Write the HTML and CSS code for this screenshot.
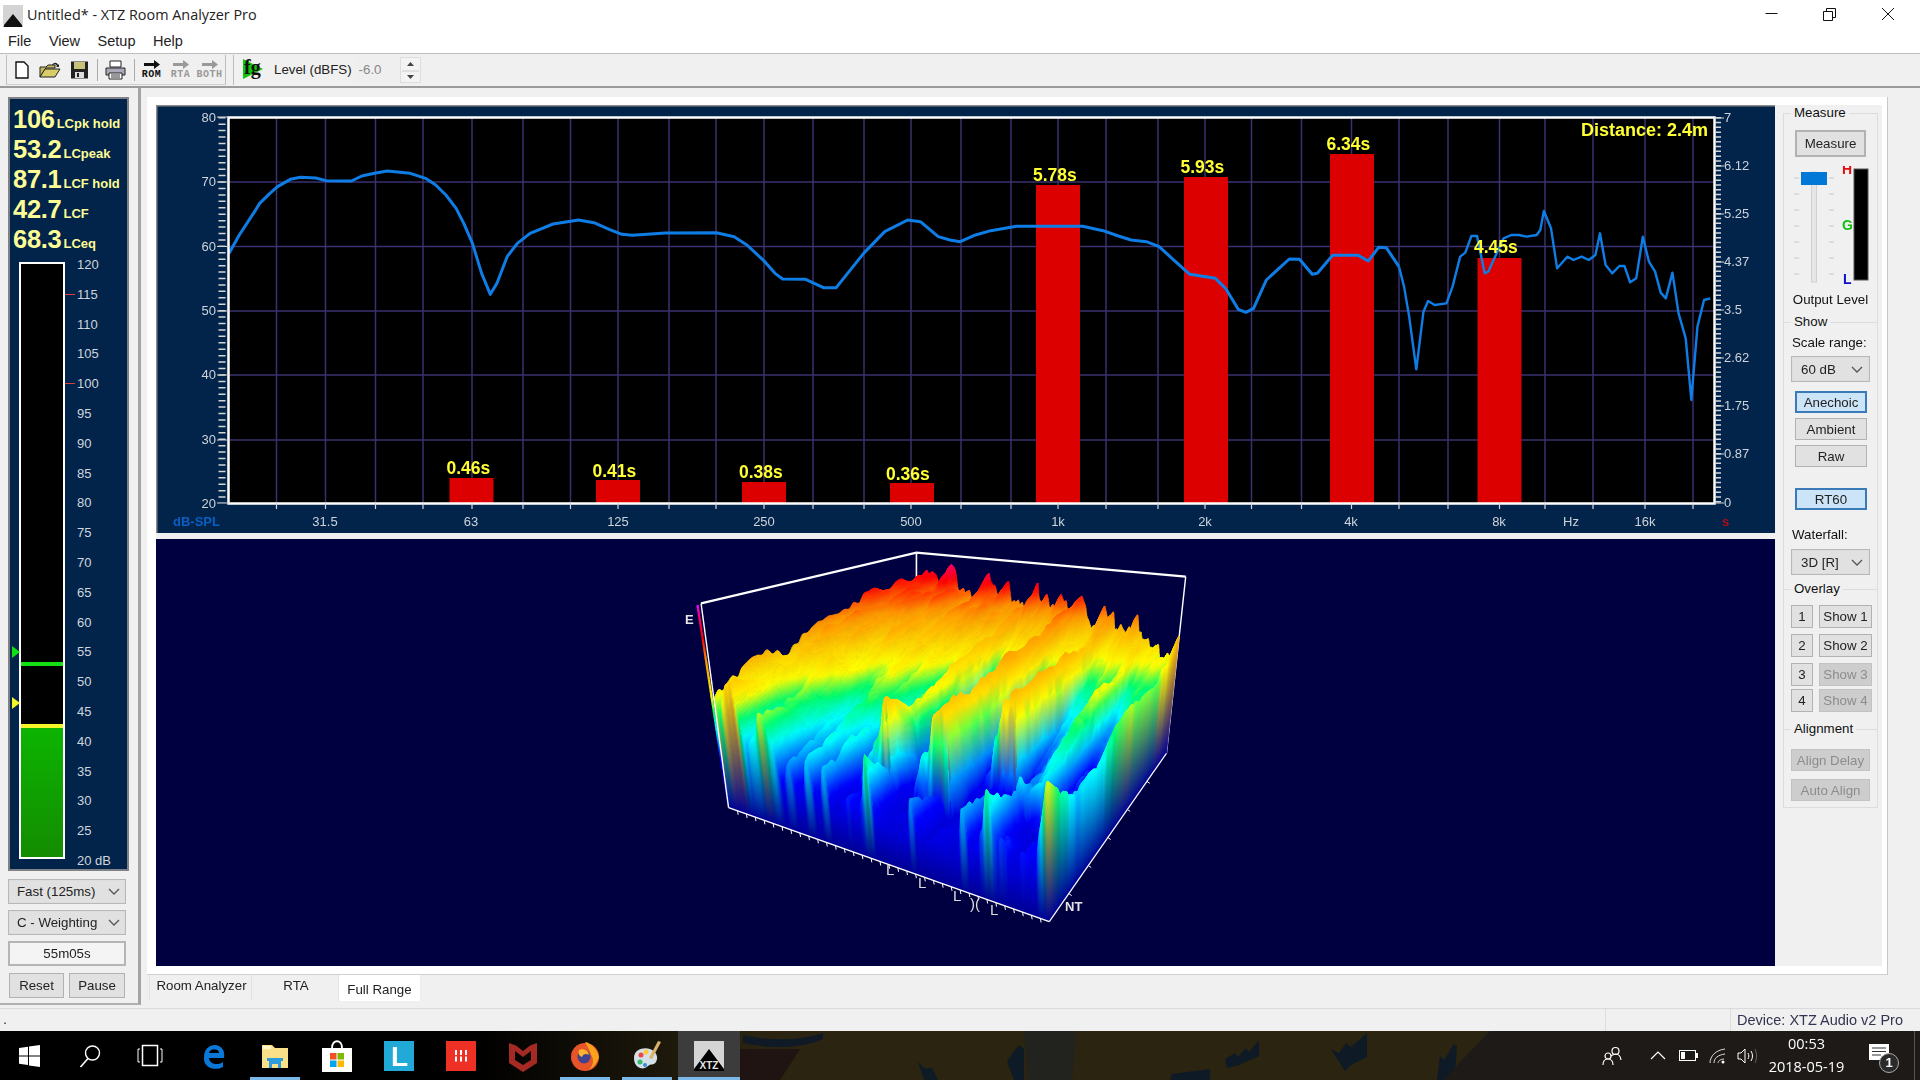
FILE: index.html
```html
<!DOCTYPE html>
<html lang="en">
<head>
<meta charset="utf-8">
<title>Untitled* - XTZ Room Analyzer Pro</title>
<link rel="stylesheet" href="styles.css">
</head>
<body>
<header class="titlebar">
  <svg class="app-icon" width="22" height="22" viewBox="0 0 22 22"><rect width="20" height="20" x="1" y="0" fill="#d4d4d4"/><path d="M11 9 L20 20 L21 24 H1 L2 20 Z" fill="#111"/></svg>
  <span class="title-text">Untitled* - XTZ Room Analyzer Pro</span>
  <div class="win-controls">
    <svg width="58" height="28" viewBox="0 0 58 28"><path d="M22.500 13.500H34.500" stroke="#111" fill="none"/></svg>
    <svg width="58" height="28" viewBox="0 0 58 28"><path d="M22.500 11.500h9v9h-9zM25.500 11V8.500h9v9H32" stroke="#111" fill="none"/></svg>
    <svg width="58" height="28" viewBox="0 0 58 28"><path d="M23 8L35 20M35 8L23 20" stroke="#111" fill="none"/></svg>
  </div>
</header>
<nav class="menubar"><span>File</span><span>View</span><span>Setup</span><span>Help</span></nav>
<div class="toolbar">
  <div class="tool-group tg-first">
    <svg class="tool" width="16" height="18" viewBox="0 0 16 18"><path d="M2 1h8l4 4v12H2z" fill="#fff" stroke="#111" stroke-width="1.400"/></svg>
    <svg class="tool" width="22" height="18" viewBox="0 0 22 18"><path d="M1 6h6l2-2h7v3H7L1 16z" fill="#c9b95a" stroke="#222"/><path d="M1 16L6 8h15l-5 8z" fill="#d8cc6a" stroke="#222"/><path d="M13 4c2-3 5-3 6 0l1-1v3h-3l1-1c-1-2-3-2-4-1" fill="#222"/></svg>
    <svg class="tool" width="19" height="18" viewBox="0 0 19 18"><rect x="1" y="0.500" width="17" height="17" fill="#222"/><rect x="4" y="1" width="11" height="7" fill="#c9c07a"/><rect x="5" y="11" width="9" height="6" fill="#ddd"/><rect x="7" y="12" width="2" height="4" fill="#222"/></svg>
    <i class="tool-sep"></i>
    <svg class="tool" width="21" height="20" viewBox="0 0 21 20"><path d="M5 1h11v6H5z" fill="#fff" stroke="#222"/><path d="M1 8h19v7H1z" fill="#aab" stroke="#222"/><path d="M4 13h13v6H4z" fill="#fff" stroke="#222"/><path d="M6 15h9M6 17h9" stroke="#333"/></svg>
    <i class="tool-sep s2"></i>
    <div class="tool-mode"><svg width="16" height="9" viewBox="0 0 16 9"><path d="M0 3h10V0l6 4.500-6 4.500V6H0z" fill="#111"/></svg><b>ROM</b></div>
    <div class="tool-mode off"><svg width="16" height="9" viewBox="0 0 16 9"><path d="M0 3h10V0l6 4.500-6 4.500V6H0z" fill="#999"/></svg><b>RTA</b></div>
    <div class="tool-mode off"><svg width="16" height="9" viewBox="0 0 16 9"><path d="M0 3h10V0l6 4.500-6 4.500V6H0z" fill="#999"/></svg><b>BOTH</b></div>
  </div>
  <div class="tool-group tg-level">
    <svg class="fg-icon" width="22" height="22" viewBox="0 0 22 22"><path d="M1 0L21 10L1 20z" fill="#12c40c"/><text x="2" y="15" class="fg-text">fg</text></svg>
    <span class="level-label">Level (dBFS)</span>
    <span class="level-input">-6.0</span>
    <div class="spin">
      <svg width="19" height="26" viewBox="0 0 19 26"><path d="M6 8l3.500-4 3.500 4zM6 17l3.500 4 3.500-4z" fill="#444"/><path d="M1 13h17" stroke="#ccc"/></svg>
    </div>
  </div>
</div>

<div class="workspace">
  <aside class="side">
    <section class="meter">
      <div class="readouts">
        <div class="readout"><b>106</b><small>LCpk hold</small></div>
        <div class="readout"><b>53.2</b><small>LCpeak</small></div>
        <div class="readout"><b>87.1</b><small>LCF hold</small></div>
        <div class="readout"><b>42.7</b><small>LCF</small></div>
        <div class="readout"><b>68.3</b><small>LCeq</small></div>
      </div>
      <div class="gauge">
        <i class="mark mark-g"></i><i class="mark mark-y"></i>
        <div class="bar">
          <div class="bar-space"></div>
          <div class="peak-g"></div>
          <div class="bar-gap"></div>
          <div class="peak-y"></div>
          <div class="bar-fill"></div>
        </div>
        <div class="scale">
          <span>120</span><span class="redtick">115</span><span>110</span><span>105</span><span class="redtick">100</span><span>95</span><span>90</span><span>85</span><span>80</span><span>75</span><span>70</span><span>65</span><span>60</span><span>55</span><span>50</span><span>45</span><span>40</span><span>35</span><span>30</span><span>25</span><span>20 dB</span>
        </div>
      </div>
    </section>
    <div class="select s-side"><span>Fast (125ms)</span><svg width="12" height="7" viewBox="0 0 12 7"><path d="M1 1l5 5 5-5" fill="none" stroke="#555" stroke-width="1.300"/></svg></div>
    <div class="select s-side s-tight"><span>C - Weighting</span><svg width="12" height="7" viewBox="0 0 12 7"><path d="M1 1l5 5 5-5" fill="none" stroke="#555" stroke-width="1.300"/></svg></div>
    <div class="timer">55m05s</div>
    <div class="side-buttons"><button class="btn b-reset">Reset</button><button class="btn b-pause">Pause</button></div>
  </aside>

  <main class="main">
    <div class="sheet">
      <div class="sheet-inner">
        <div class="charts">
          <svg class="chart" width="1619" height="428" viewBox="156 105 1619 428">
            <rect x="156" y="105" width="1619" height="428" fill="#02234a"/>
            <path d="M156 105.500H1775M156.500 105V533" stroke="#8a8a8a" stroke-width="2" fill="none"/>
            <rect x="229" y="117" width="1485" height="386" fill="#000"/>
            <g class="grid">
              <path d="M229 182H1714M229 246.500H1714M229 311H1714M229 375H1714M229 440H1714"/>
              <path d="M276.500 117V503M325.500 117V503M375.500 117V503M423 117V503M472 117V503M523 117V503M570.500 117V503M618 117V503M669 117V503M716 117V503M764 117V503M813 117V503M864 117V503M911 117V503M961 117V503M1011 117V503M1058 117V503M1106 117V503M1158 117V503M1205 117V503M1251.500 117V503M1301.500 117V503M1351.500 117V503M1399 117V503M1448 117V503M1499.500 117V503M1545 117V503M1593 117V503M1645 117V503M1693 117V503"/>
            </g>
            <g fill="#dd0000">
              <rect x="449.500" y="478" width="44" height="25"/><rect x="596" y="480" width="44" height="23"/><rect x="742" y="482" width="44" height="21"/><rect x="890" y="483" width="44" height="20"/>
              <rect x="1036" y="185" width="44" height="318"/><rect x="1184" y="177" width="44" height="326"/><rect x="1330" y="154" width="44" height="349"/><rect x="1477.500" y="258" width="44" height="245"/>
            </g>
            <g transform="translate(150,100) scale(0.5102,0.33333)" fill="none" stroke="#0f7de6">
              <polyline class="curve c-thick" points="155,460 175,405 205,335 215,310 235,280 250,260 275,238 295,232 325,234 345,242 395,243 415,228 440,220 465,213 510,220 540,235 560,255 580,285 600,325 615,370 632,430 650,520 667,583 680,550 700,470 720,430 745,400 790,372 840,360 870,368 900,388 925,403 945,406 975,403 1010,399 1110,398 1145,410 1170,435 1205,485 1225,520 1240,537 1285,538 1320,563 1345,563 1370,515 1400,458 1440,395 1485,360 1510,365 1545,410 1568,420 1588,425 1618,405 1648,392 1698,379 1828,379 1868,392 1898,408 1923,420 1953,425 1978,440 2003,475 2038,523 2088,535 2108,565 2133,628 2148,637 2163,625 2188,540 2233,477 2253,478 2278,523 2288,520 2318,466 2368,466 2388,483 2408,442 2423,443 2448,500"/>
              <polyline class="curve c-thin" points="2448,500 2458,560 2468,650 2482,808 2496,635 2505,603 2518,615 2541,610 2553,560 2568,470 2578,458 2590,408 2601,408 2616,520 2623,515 2653,415 2668,405 2683,405 2698,410 2718,405 2725,390 2732,333 2746,385 2758,505 2778,470 2790,480 2806,470 2820,480 2833,465 2842,400 2853,495 2866,520 2880,498 2890,498 2901,547 2913,535 2926,410 2938,485 2950,515 2961,578 2971,595 2984,518 2996,640 3010,715 3021,900 3033,680 3046,600 3058,595"/>
            </g>
            <rect x="228.500" y="117.500" width="1486" height="386" fill="none" stroke="#fff" stroke-width="2.500"/>
            <g class="ticks">
              <path class="minor-l" d="M222 117V503"/>
              <path class="minor-r" d="M1718 117V503"/>
              <path d="M217 117H229M217 182H229M217 246.500H229M217 311H229M217 375H229M217 440H229M217 503H229"/>
              <path d="M1714 118H1724M1714 166H1724M1714 214H1724M1714 262H1724M1714 310H1724M1714 358H1724M1714 406H1724M1714 454H1724M1714 503H1724"/>
              <path d="M276.500 503V509M325.500 503V509M375.500 503V509M423 503V509M472 503V509M523 503V509M570.500 503V509M618 503V509M669 503V509M716 503V509M764 503V509M813 503V509M864 503V509M911 503V509M961 503V509M1011 503V509M1058 503V509M1106 503V509M1158 503V509M1205 503V509M1251.500 503V509M1301.500 503V509M1351.500 503V509M1399 503V509M1448 503V509M1499.500 503V509M1545 503V509M1593 503V509M1645 503V509M1693 503V509"/>
            </g>
            <g class="axis-l">
              <text x="216" y="122">80</text><text x="216" y="186">70</text><text x="216" y="250.500">60</text><text x="216" y="315">50</text><text x="216" y="379">40</text><text x="216" y="444">30</text><text x="216" y="507.500">20</text>
            </g>
            <g class="axis-r">
              <text x="1724" y="122">7</text><text x="1724" y="170">6.12</text><text x="1724" y="218">5.25</text><text x="1724" y="266">4.37</text><text x="1724" y="314">3.5</text><text x="1724" y="362">2.62</text><text x="1724" y="410">1.75</text><text x="1724" y="458">0.87</text><text x="1724" y="507">0</text>
            </g>
            <g class="axis-x">
              <text x="325" y="526">31.5</text><text x="471" y="526">63</text><text x="618" y="526">125</text><text x="764" y="526">250</text><text x="911" y="526">500</text><text x="1058" y="526">1k</text><text x="1205" y="526">2k</text><text x="1351" y="526">4k</text><text x="1499" y="526">8k</text><text x="1571" y="526">Hz</text><text x="1645" y="526">16k</text>
            </g>
            <text class="unit-db" x="173" y="526">dB-SPL</text>
            <text class="unit-s" x="1722" y="526">s</text>
            <g class="bar-labels">
              <text x="446.500" y="474">0.46s</text><text x="592.500" y="476.500">0.41s</text><text x="739" y="478">0.38s</text><text x="886" y="479.500">0.36s</text>
              <text x="1033" y="181">5.78s</text><text x="1180.500" y="172.500">5.93s</text><text x="1326.500" y="150">6.34s</text><text x="1474" y="253">4.45s</text>
            </g>
            <text class="distance" x="1708" y="136">Distance: 2.4m</text>
          </svg>
          <div class="waterfall">
            <canvas id="wf" width="1619" height="427"></canvas>
            <svg class="wf-labels" width="1619" height="427" viewBox="156 539 1619 427">
              <text class="wf-b" x="685" y="624">E</text>
              <text class="wf-b" x="1065" y="911">NT</text>
              <text class="wf-l" x="886" y="875">L</text><text class="wf-l" x="918" y="888">L</text><text class="wf-l" x="953" y="901">L</text><text class="wf-l" x="970" y="909">)(</text><text class="wf-l" x="990" y="915">L</text>
            </svg>
          </div>
        </div>

        <div class="controls">
          <div class="group g-measure">
            <span class="legend">Measure</span>
            <button class="btn b-measure">Measure</button>
            <svg class="output-svg" width="78" height="122" viewBox="0 0 78 122">
              <rect x="19.500" y="6" width="5" height="110" fill="#e6e6e6" stroke="#d0d0d0"/>
              <path class="otick" d="M2 12h5M37 12h5M2 28h5M37 28h5M2 44h5M37 44h5M2 60h5M37 60h5M2 76h5M37 76h5M2 92h5M37 92h5M2 108h5M37 108h5"/>
              <rect x="9" y="6" width="26" height="13" fill="#0078d7"/>
              <rect x="62" y="3" width="14" height="111" fill="#000" stroke="#555"/>
              <text class="led led-h" x="50" y="8">H</text>
              <text class="led led-g" x="50" y="64">G</text>
              <text class="led led-l" x="51" y="118">L</text>
            </svg>
            <div class="out-label">Output Level</div>
          </div>
          <div class="group g-show">
            <span class="legend">Show</span>
            <div class="ctl-label">Scale range:</div>
            <div class="select s-ctl"><span>60 dB</span><svg width="12" height="7" viewBox="0 0 12 7"><path d="M1 1l5 5 5-5" fill="none" stroke="#555" stroke-width="1.300"/></svg></div>
            <button class="btn b-wide sel b-a1">Anechoic</button>
            <button class="btn b-wide b-a2">Ambient</button>
            <button class="btn b-wide b-a2">Raw</button>
            <button class="btn b-wide sel b-rt">RT60</button>
            <div class="ctl-label l-water">Waterfall:</div>
            <div class="select s-ctl s-water"><span>3D [R]</span><svg width="12" height="7" viewBox="0 0 12 7"><path d="M1 1l5 5 5-5" fill="none" stroke="#555" stroke-width="1.300"/></svg></div>
          </div>
          <div class="group g-overlay">
            <span class="legend">Overlay</span>
            <div class="ov-row r1"><button class="btn b-num">1</button><button class="btn b-show">Show 1</button></div>
            <div class="ov-row r2"><button class="btn b-num">2</button><button class="btn b-show">Show 2</button></div>
            <div class="ov-row r3"><button class="btn b-num">3</button><button class="btn b-show dis">Show 3</button></div>
            <div class="ov-row r4"><button class="btn b-num">4</button><button class="btn b-show dis">Show 4</button></div>
          </div>
          <div class="group g-align">
            <span class="legend">Alignment</span>
            <button class="btn b-al dis b-al1">Align Delay</button>
            <button class="btn b-al dis b-al2">Auto Align</button>
          </div>
        </div>
      </div>
    </div>
    <div class="tabs">
      <span class="tab t-room">Room Analyzer</span>
      <span class="tab t-rta">RTA</span>
      <span class="tab t-full">Full Range</span>
    </div>
  </main>
</div>

<footer class="statusbar"><span class="st-left">.</span><span class="st-mid"></span><span class="st-dev">Device: XTZ Audio v2 Pro</span></footer>

<div class="taskbar">
  <svg class="wallpaper" width="1180" height="49" viewBox="0 0 1180 49">
    <path d="M0 18H60L40 49H0z" fill="#1f1412"/>
    <path d="M3 4C30 10 60 10 83 2V8C60 18 30 18 3 12z" fill="#0f1a26"/>
    <path d="M284 0h52l-4 49h-44z" fill="#22231f"/>
    <path d="M485 28l10-6 3 4 8-9 3 4 10-12v16l-20 9-12 3z" fill="#0e1a26"/>
    <path d="M591 18l8 4 7-10 5 4 16-14v24l-16 8-6 6-8-12z" fill="#0e1a26"/>
    <path d="M697 49l3-24 4 4 10-16 3 2-2 26-8 8z" fill="#0e1a26"/>
    <path d="M430 49l2-6 38-5v11z" fill="#0e1a26"/>
    <path d="M178 31l6 6 8 0 6 12h-14z" fill="#0e1a26"/>
    <path d="M267 30l12-16 5 4v31h-10z" fill="#0e1a26"/>
    <path d="M750 0H1180V49H703z" fill="#1d1a17"/>
  </svg>
  <div class="tb-cell c-sys"><svg width="22" height="22" viewBox="0 0 22 22"><path d="M0 3l9-1.300V10.500H0zM10 1.500L21 0V10.500H10zM0 11.500h9V20L0 18.800zM10 11.500h11V22L10 20.400z" fill="#fff"/></svg></div>
  <div class="tb-cell c-sys"><svg width="22" height="24" viewBox="0 0 22 24"><circle cx="13.500" cy="9" r="7" fill="none" stroke="#fff" stroke-width="1.400"/><path d="M9 14.500L1.500 23" stroke="#fff" stroke-width="1.600"/></svg></div>
  <div class="tb-cell c-sys"><svg width="26" height="24" viewBox="0 0 26 24"><rect x="5.500" y="1.500" width="15" height="20" fill="none" stroke="#fff" stroke-width="1.500"/><path d="M3 5H1v13h2M23 5h2v13h-2" fill="none" stroke="#fff"/></svg></div>
  <div class="tb-cell c-edge"><svg width="26" height="28" viewBox="0 0 26 28"><path d="M4 15C4 5 13 1 19 4c4 2 6 6 5 12H9c0 6 9 8 14 4v5c-7 4-20 2-19-10z M9 11h10c0-5-9-5-10 0z" fill="#0a78d7" fill-rule="evenodd"/></svg></div>
  <div class="tb-cell open"><svg width="28" height="26" viewBox="0 0 28 26"><path d="M1 2h10l3 3h13v20H1z" fill="#fbe08a"/><rect x="2" y="3" width="8" height="3" fill="#fff7d0"/><path d="M8 17h12v8h-3v-4h-6v4H8z" fill="#2e9bdc"/><rect x="6" y="15" width="16" height="3" fill="#2e9bdc"/></svg></div>
  <div class="tb-cell"><svg width="30" height="32" viewBox="0 0 30 32"><path d="M10 8c0-9 10-9 10 0" fill="none" stroke="#fff" stroke-width="1.800"/><rect y="8" width="30" height="24" fill="#fff"/><rect x="8" y="13" width="6.500" height="6.500" fill="#f25022"/><rect x="15.500" y="13" width="6.500" height="6.500" fill="#7fba00"/><rect x="8" y="20.500" width="6.500" height="6.500" fill="#00a4ef"/><rect x="15.500" y="20.500" width="6.500" height="6.500" fill="#ffb900"/></svg></div>
  <div class="tb-cell"><svg width="30" height="30" viewBox="0 0 30 30"><rect width="30" height="30" fill="#21aad8"/><text class="tile-l" x="7" y="25">L</text></svg></div>
  <div class="tb-cell"><svg width="30" height="30" viewBox="0 0 30 30"><rect width="30" height="30" fill="#ee3124"/><path d="M10 9v13M15 9v13M20 9v13" stroke="#fff" stroke-width="2" stroke-dasharray="5 1.500"/></svg></div>
  <div class="tb-cell"><svg width="28" height="32" viewBox="0 0 28 32"><path d="M0 3l7 2.500L14 11l7-5.500L28 3v20l-14 9L0 23zM6 11v9l8 5 8-5v-9l-8 6z" fill="#a52a24" fill-rule="evenodd"/></svg></div>
  <div class="tb-cell open"><svg width="30" height="32" viewBox="0 0 30 32"><ellipse cx="15" cy="17" rx="14" ry="14" fill="#e8542a"/><path d="M15 2c6 1 12 7 14 15-2 6-6 11-10 13 5-5 5-11 2-15-1-5-4-9-6-13z" fill="#f9a31d"/><circle cx="14" cy="17" r="6.500" fill="#43428f"/><path d="M9 10c4-2 9 0 10 5-3-2-6-1-7 2-3-1-4-4-3-7z" fill="#ffb62e"/></svg></div>
  <div class="tb-cell open"><svg width="30" height="32" viewBox="0 0 30 32"><path d="M2 18C2 9 12 7 18 9c6 2 9 8 6 13-3 4-5 1-8 4-3 3-7 3-10 1-3-2-4-5-4-9z" fill="#d5dfe8"/><circle cx="9" cy="15" r="2.500" fill="#e44"/><circle cx="14" cy="12" r="2.500" fill="#fc3"/><circle cx="8" cy="22" r="2.500" fill="#3b6"/><circle cx="13" cy="25" r="2" fill="#38d"/><path d="M26 1l3 1-9 17-3-1z" fill="#d9b36a"/></svg></div>
  <div class="tb-cell active"><svg width="30" height="30" viewBox="0 0 30 30"><rect width="30" height="30" fill="#d4d4d4"/><path d="M15 8L30 28V30H0V28z" fill="#000"/><text class="tile-xtz" x="15" y="28">XTZ</text></svg></div>
  <div class="tray">
    <svg width="20" height="20" viewBox="0 0 20 20" class="t-person"><circle cx="13.500" cy="5" r="3.500" fill="none" stroke="#fff" stroke-width="1.200"/><circle cx="6" cy="10" r="3" fill="none" stroke="#fff" stroke-width="1.200"/><path d="M1 19c0-4 2-6 5-6s5 2 5 6M9 10c2-1 3-2 4.500-2 3 0 5 2 5.500 6" fill="none" stroke="#fff" stroke-width="1.200"/></svg>
    <svg width="16" height="9" viewBox="0 0 16 9" class="t-chev"><path d="M1 8l7-7 7 7" fill="none" stroke="#fff" stroke-width="1.200"/></svg>
    <svg width="19" height="11" viewBox="0 0 19 11" class="t-batt"><rect x="0.500" y="0.500" width="16" height="10" fill="none" stroke="#fff"/><rect x="2" y="2" width="4" height="7" fill="#fff"/><rect x="17" y="3" width="2" height="5" fill="#fff"/></svg>
    <svg width="17" height="16" viewBox="0 0 17 16" class="t-wifi"><path d="M1 15C1 8 7 2 16 1M5 15c0-5 4-8 11-9M9 15c0-2 3-4 6-4" fill="none" stroke="#ddd"/><circle cx="14" cy="14" r="1.500" fill="#fff"/></svg>
    <svg width="20" height="16" viewBox="0 0 20 16" class="t-vol"><path d="M1 5h3l4-4v14l-4-4H1z" fill="none" stroke="#fff"/><path d="M11 5c1 2 1 4 0 6M14 3c2 3 2 7 0 10" fill="none" stroke="#fff"/><path d="M18 1c2 4 2 10 0 14" fill="none" stroke="#666"/></svg>
    <div class="clock"><span>00:53</span><span>2018-05-19</span></div>
    <div class="notif"><svg width="20" height="17" viewBox="0 0 20 17"><path d="M0 0h20v16H0z" fill="#fff"/><path d="M3 4h14M3 7.500h14M3 11h9" stroke="#333"/></svg><span class="badge">1</span></div>
    <i class="show-desktop"></i>
  </div>
</div>
<script src="waterfall.js"></script>
</body>
</html>
```
FILE: styles.css
```css
* { box-sizing: border-box; }
html, body { margin: 0; padding: 0; }
body {
  width: 1920px; height: 1080px; overflow: hidden;
  display: flex; flex-direction: column;
  background: #f0f0f0; color: #111;
  font-family: "Liberation Sans", Arial, sans-serif; font-size: 13.300px;
  filter: blur(0.35px);
}
button { font: inherit; color: inherit; padding: 0; }

.titlebar { height: 30px; flex: none; display: flex; align-items: center; background: #fff; padding-left: 2px; position: relative; }
.app-icon { flex: none; margin-top: 2px; }
.title-text { margin-left: 3px; margin-top: -2px; font: 14.400px "Open Sans", "Noto Sans", sans-serif; color: #222; }
.win-controls { margin-left: auto; display: flex; margin-right: 3px; margin-top: -3px; }

.menubar { height: 24px; flex: none; background: #fff; display: flex; align-items: center; padding: 0 0 2px 8px; gap: 17.500px; font-size: 14.500px; color: #222; border-bottom: 1px solid #bdbdbd; }

.toolbar { height: 34px; flex: none; display: flex; align-items: center; background: #f0f0f0; border-bottom: 2px solid #9a9a9a; padding-left: 6px; }
.tool-group { display: flex; align-items: center; height: 30px; border-right: 1px solid #bdbdbd; border-bottom: 1px solid #cfcfcf; }
.tg-first { width: 220px; padding-left: 7px; border-left: 1px solid #c0c0c0; }
.tool { margin-right: 9px; flex: none; }
.tool-sep { width: 1px; height: 22px; background: #aaa; margin: 0 7px 0 -1px; flex: none; }
.tool-sep.s2 { margin-right: 2px; }
.tool-mode { width: 29px; display: flex; flex-direction: column; align-items: center; gap: 1px; flex: none; }
.tool-mode b { font: bold 10px/10px "Liberation Mono", monospace; letter-spacing: 0.500px; }
.tool-mode.off b { color: #999; }
.tg-level { margin-left: 7px; padding-left: 8px; width: 201px; border-left: 1px solid #bdbdbd; border-bottom: 0; border-right: 0; }
.fg-icon { flex: none; }
.fg-text { font: bold 20px "Liberation Serif", serif; fill: #111; }
.level-label { margin-left: 10px; margin-top: -2px; font-size: 13.300px; white-space: nowrap; color: #222; }
.level-input { width: 45px; height: 26px; margin-left: 3px; background: #efefef; color: #888; padding: 5px 0 0 4px; font-size: 13.300px; flex: none; }
.spin { width: 21px; height: 26px; flex: none; border: 1px solid #ddd; background: #f3f3f3; }
.spin svg { display: block; }

.workspace { height: 920px; flex: none; display: flex; }

.side { width: 141px; height: 917px; flex: none; border-right: 3px solid #a4a4a4; border-bottom: 2px solid #b0b0b0; padding-left: 8px; }
.meter { width: 121px; height: 774px; margin-top: 9px; background: #02234a; border: 2px solid #7e8286; color: #cfd6dc; position: relative; display: flex; flex-direction: column; }
.readouts { height: 158px; padding: 5px 0 0 3px; flex: none; }
.readout { height: 30px; display: flex; align-items: baseline; color: #fdfd96; }
.readout b { font-size: 25.500px; line-height: 30px; letter-spacing: -0.300px; }
.readout small { font-size: 13px; font-weight: bold; margin-left: 2px; }
.gauge { flex: 1; display: flex; position: relative; padding-left: 9px; }
.bar { width: 46px; height: 597px; margin-top: 5px; border: 2px solid #fff; background: #000; display: flex; flex-direction: column; flex: none; }
.bar-space { flex: 1; }
.peak-g { height: 4px; background: #12e012; flex: none; }
.bar-gap { height: 58px; flex: none; }
.peak-y { height: 4px; background: #f5f52a; flex: none; }
.bar-fill { height: 129px; flex: none; background: linear-gradient(#0cb400, #148c00); }
.scale { flex: 1; height: 612px; margin-left: 12px; display: flex; flex-direction: column; justify-content: space-between; font-size: 13px; line-height: 16px; white-space: nowrap; }
.scale span { position: relative; height: 16px; display: block; }
.redtick::before { content: ""; position: absolute; left: -12px; width: 10px; top: 7px; height: 1px; background: #d8403c; }
.mark { position: absolute; left: 2px; width: 0; height: 0; border-left: 8px solid #10e010; border-top: 6px solid transparent; border-bottom: 6px solid transparent; }
.mark-g { top: 389px; }
.mark-y { top: 440px; border-left-color: #f4f42a; }

.select { display: flex; align-items: center; justify-content: space-between; background: #e1e1e1; border: 1px solid #b8b8b8; box-shadow: inset 0 0 0 1px #ddd; color: #222; }
.s-side { width: 118px; height: 25px; margin-top: 8px; padding: 0 5px 0 8px; font-size: 13.300px; }
.s-tight { margin-top: 6px; }
.timer { width: 118px; height: 25px; margin-top: 6px; background: #f4f4f4; border: 2px solid #b5b5b5; text-align: center; line-height: 21px; font-size: 13.300px; color: #222; }
.side-buttons { display: flex; width: 116px; margin: 7px 0 0 1px; gap: 5px; }
.btn { display: block; background: #e1e1e1; border: 1px solid #b2b2b2; text-align: center; font-size: 13.300px; color: #222; }
.b-reset { width: 55px; height: 25px; }
.b-pause { width: 56px; height: 25px; }

.main { flex: 1; padding: 9px 32px 0 6px; display: flex; flex-direction: column; }
.sheet { height: 878px; flex: none; background: #fff; padding: 8px 5px 8px 9px; border-right: 1px solid #c8c8c8; border-bottom: 1px solid #d0d0d0; }
.sheet-inner { height: 100%; background: #f0f0f0; display: flex; }
.charts { width: 1619px; flex: none; display: flex; flex-direction: column; gap: 6px; }
.chart { display: block; flex: none; }
.grid path { stroke: #3a3270; stroke-width: 1.500; fill: none; }
.ticks path { stroke: #d6d6d6; stroke-width: 1.200; fill: none; }
.ticks .minor-l { stroke-width: 7; stroke-dasharray: 1.500 4.930; }
.ticks .minor-r { stroke-width: 6; stroke-dasharray: 1.500 3.300; }
.axis-l text { text-anchor: end; font-size: 13px; fill: #cdd4da; }
.axis-r text { font-size: 13px; fill: #cdd4da; }
.axis-x text { text-anchor: middle; font-size: 13px; fill: #cdd4da; }
.unit-db { font-size: 13px; font-weight: bold; fill: #0a5fc0; }
.unit-s { font-size: 13px; font-weight: bold; fill: #b00c18; }
.bar-labels text { font-size: 17.500px; font-weight: bold; fill: #ffff33; }
.distance { font-size: 18px; font-weight: bold; fill: #ffff33; text-anchor: end; }
.curve { vector-effect: non-scaling-stroke; stroke-linejoin: round; }
.c-thick { stroke-width: 3; }
.c-thin { stroke-width: 2.400; }

.waterfall { width: 1619px; height: 427px; flex: none; position: relative; background: #000040; }
.waterfall canvas { display: block; }
.wf-labels { position: absolute; left: 0; top: 0; }
.wf-b { font-size: 13px; font-weight: bold; fill: #e4e4e4; }
.wf-l { font-size: 15px; fill: #dcdcdc; }

.controls { width: 95px; height: 695px; margin: 8px 0 0 8px; border: 1px solid #dcdcdc; border-top: 0; flex: none; }
.group { border-top: 1px solid #dcdcdc; position: relative; }
.legend { display: inline-block; position: relative; top: -9px; margin-left: 7px; padding: 0 3px; height: 16px; line-height: 16px; background: #f0f0f0; font-size: 13.300px; color: #111; vertical-align: top; }
.g-measure { height: 209px; }
.g-show { height: 267px; }
.g-overlay { height: 140px; }
.g-align { height: 78px; }
.b-measure { width: 71px; height: 27px; margin: 0 0 0 11px; border-width: 2px; }
.output-svg { display: block; margin: 9px 0 0 8px; }
.otick { stroke: #c8c8c8; fill: none; }
.led { font-size: 14px; font-weight: bold; }
.led-h { fill: #e01010; }
.led-g { fill: #10c010; }
.led-l { fill: #1010d0; }
.out-label { font-size: 13.300px; text-align: center; margin-top: 4px; white-space: nowrap; }
.ctl-label { font-size: 13.300px; margin-left: 8px; height: 16px; line-height: 16px; }
.g-show > .ctl-label:first-of-type { margin-top: -4px; }
.s-ctl { width: 79px; height: 26px; margin: 5px 0 0 7px; padding: 0 6px 0 9px; border-width: 1px; font-size: 13.300px; }
.b-wide { width: 72px; height: 22px; margin-left: 11px; }
.b-a1 { margin-top: 9px; }
.b-a2 { margin-top: 5px; }
.b-rt { margin-top: 21px; }
.sel { background: #cce4f7; border: 2px solid #3a7ab8; }
.g-show > .l-water { margin-top: 17px; }
.g-show > .s-water { margin-top: 6px; }
.ov-row { display: flex; gap: 6px; margin-left: 7px; }
.r1 { margin-top: -1px; }
.r2, .r3 { margin-top: 6px; }
.r4 { margin-top: 3px; }
.b-num { width: 22px; height: 23px; }
.b-show { width: 53px; height: 23px; }
.dis { background: #cdcdcd; border-color: #c2c2c2; color: #8c8c8c; }
.b-al { width: 79px; height: 22px; margin-left: 7px; }
.b-al1 { margin-top: 3px; }
.b-al2 { margin-top: 8px; }

.tabs { display: flex; height: 26px; margin-left: 2px; flex: none; }
.tab { display: block; text-align: center; font-size: 13.300px; color: #222; padding-top: 3px; padding-left: 2px; border-right: 1px solid #e2e2e2; }
.t-room { width: 103px; border-left: 1px solid #e2e2e2; }
.t-rta { width: 87px; }
.t-full { width: 82px; background: #fff; padding-top: 7px; padding-left: 0; border-right: 1px solid #eee; }

.statusbar { height: 23px; flex: none; display: flex; border-top: 1px solid #dadada; background: #f0f0f0; color: #333; font-size: 14.500px; }
.st-left { width: 1605px; padding-left: 3px; line-height: 20px; }
.st-mid { width: 125px; border-left: 1px solid #ddd; }
.st-dev { flex: 1; border-left: 1px solid #ddd; padding-left: 6px; line-height: 22px; color: #343450; white-space: nowrap; }

.taskbar { height: 49px; flex: none; display: flex; align-items: center; position: relative; background: linear-gradient(90deg, #000 0 480px, #1f1a0c 680px, #2a2410 760px); color: #fff; }
.wallpaper { position: absolute; right: 0; top: 0; }
.tb-cell { width: 62px; height: 49px; flex: none; display: flex; align-items: center; justify-content: center; position: relative; }
.c-sys { width: 60px; }
.c-edge { margin-left: 2px; }
.open { background: linear-gradient(#7ab8e8, #7ab8e8) center bottom / 50px 3px no-repeat; }
.active { background: linear-gradient(#7ab8e8, #7ab8e8) center bottom / 100% 3px no-repeat, #3c3c3c; }
.tile-l { font-size: 28px; font-weight: bold; fill: #fff; }
.tile-xtz { font-size: 10px; font-weight: bold; fill: #e4e4e4; text-anchor: middle; }
.tray { margin-left: auto; display: flex; align-items: center; position: relative; height: 49px; padding-right: 5px; }
.t-person { margin-right: 28px; }
.t-chev { margin-right: 13.500px; }
.t-batt { margin-right: 11px; }
.t-wifi { margin-right: 11px; }
.t-vol { margin-right: 7px; }
.clock { width: 85px; display: flex; flex-direction: column; align-items: center; gap: 3px; font: 14.500px/20px "Open Sans", "Noto Sans", sans-serif; color: #fff; }
.notif { position: relative; width: 22px; height: 30px; margin-left: 20px; }
.notif svg { display: block; margin-top: 3px; }
.badge { position: absolute; left: 10px; top: 12px; width: 20px; height: 20px; border-radius: 50%; border: 1.500px solid #aaa; background: #2a2a2a; color: #fff; font: bold 13px/17px "Liberation Sans", sans-serif; text-align: center; }
.show-desktop { width: 1px; height: 49px; background: #555; margin-left: 23px; }
```
FILE: waterfall.js
```js
(function () {
  var cv = document.getElementById('wf');
  var ctx = cv.getContext('2d');

  // All geometry in the coordinates of a zoom of the plot, then mapped to the canvas.
  function sx(x) { return 504 + x / 2.8; }
  function sy(y) { return 1 + y / 3; }

  var L = [192, 803], F = [1090, 1145], R = [1418, 640], B = [720, 440];
  var HL = [-77, -613], HF = [-10, -800], HR = [54, -530], HB = [-2, -402];

  function bil(a, b, c, d, u, v, k) {
    return (1 - v) * ((1 - u) * a[k] + u * b[k]) + v * ((1 - u) * d[k] + u * c[k]);
  }

  // Seeded noise table
  var seed = 12345, table = [];
  for (var n = 0; n < 4096; n++) {
    seed = (seed * 1103515245 + 12345) & 0x7fffffff;
    table.push(seed / 0x7fffffff);
  }
  function rnd(i) { return table[((i % 4096) + 4096) % 4096]; }
  function smooth(t) { t = Math.max(0, Math.min(1, t)); return t * t * (3 - 2 * t); }
  function noise1(x) {
    var i = Math.floor(x), f = x - i;
    return rnd(i) + (rnd(i + 1) - rnd(i)) * smooth(f);
  }
  function noise2(x, y) {
    var i = Math.floor(x), j = Math.floor(y), fx = smooth(x - i), fy = smooth(y - j);
    var a = rnd(i + j * 57), b = rnd(i + 1 + j * 57), c = rnd(i + (j + 1) * 57), d = rnd(i + 1 + (j + 1) * 57);
    return (a + (b - a) * fx) * (1 - fy) + (c + (d - c) * fx) * fy;
  }

  var ridges = [
    { u: 0.45, v: 0.12, h: 0.47, wl: 0.055, wr: 0.004 },
    { u: 0.62, v: 0.15, h: 0.58, wl: 0.055, wr: 0.004 },
    { u: 0.75, v: 0.33, h: 0.62, wl: 0.05, wr: 0.004 },
    { u: 0.885, v: 0.21, h: 0.36, wl: 0.05, wr: 0.006 }
  ];

  function height(u, v) {
    var top = 0.83 - 0.2 * u * u * u - 0.06 * smooth(u / 0.25);
    var exp = 0.85 + 1.3 * smooth((u - 0.28) / 0.2);
    var b = 0.14 + (top - 0.14) * Math.pow(v, exp);
    b += 0.36 * (1 - v) * Math.exp(-u / 0.11);
    var h = b;
    for (var i = 0; i < ridges.length; i++) {
      var r = ridges[i];
      if (v < r.v) continue;
      var t = (v - r.v) / (1 - r.v);
      var rh = r.h + (top - r.h) * Math.pow(t, 0.9);
      var d = u - r.u;
      var w = d <= 0 ? r.wl : r.wr;
      var s = Math.exp(-(d * d) / (2 * w * w));
      var edge = Math.min(1, (v - r.v) / 0.012);
      h = Math.max(h, rh * Math.sqrt(s) * edge);
    }
    // right side face stays high
    h = Math.max(h, (0.36 + 0.28 * Math.pow(v, 2.5)) * smooth((u - 0.93) / 0.07));
    // streaks along the time axis
    h += (noise1(u * 70) - 0.5) * 0.06;
    h += (noise2(u * 45, v * 5) - 0.5) * 0.09;
    h += (noise2(u * 22, v * 14) - 0.5) * 0.05 * (0.4 + v);
    // jagged detail
    h += (noise2(u * 130, v * 40) - 0.5) * 0.035;
    // skyline spikes at the far edge
    var far = smooth((v - 0.9) / 0.1);
    h += far * (Math.pow(noise1(u * 55 + 11), 2.5) * 0.18 - 0.04) * smooth(u / 0.1 + 0.02);
    // tall thin spikes near the front edge
    var near = Math.max(0, 1 - v / 0.3);
    h += near * Math.pow(noise1(u * 38 + 40), 3) * 0.42 * smooth(u / 0.06);
    return Math.max(0.01, Math.min(0.97, h));
  }

  var stops = [
    [0, 0, 0, 150], [0.22, 0, 0, 255], [0.38, 0, 255, 255], [0.46, 0, 255, 110],
    [0.54, 255, 255, 0], [0.72, 255, 150, 0], [0.84, 255, 0, 0], [0.93, 255, 0, 90], [1, 255, 0, 255]
  ];
  function cmap(h) {
    for (var i = 1; i < stops.length; i++) {
      if (h <= stops[i][0]) {
        var a = stops[i - 1], b = stops[i], t = (h - a[0]) / (b[0] - a[0]);
        return 'rgb(' + Math.round(a[1] + (b[1] - a[1]) * t) + ',' + Math.round(a[2] + (b[2] - a[2]) * t) + ',' + Math.round(a[3] + (b[3] - a[3]) * t) + ')';
      }
    }
    return 'rgb(255,0,255)';
  }

  function project(u, v, h) {
    return [
      sx(bil(L, F, R, B, u, v, 0) + h * bil(HL, HF, HR, HB, u, v, 0)),
      sy(bil(L, F, R, B, u, v, 1) + h * bil(HL, HF, HR, HB, u, v, 1))
    ];
  }

  function line(pts, w, col) {
    ctx.beginPath();
    ctx.moveTo(sx(pts[0][0]), sy(pts[0][1]));
    for (var i = 1; i < pts.length; i++) ctx.lineTo(sx(pts[i][0]), sy(pts[i][1]));
    ctx.lineWidth = w; ctx.strokeStyle = col; ctx.stroke();
  }

  // Back lines of the box
  line([[115, 190], [718, 38], [1472, 110]], 2.2, '#fff');
  line([[718, 38], [718, 130]], 1.6, '#fff');
  line([[1472, 110], [1418, 640]], 1.4, '#fff');

  // Height grid
  var M = 340, N = 170, grid = [];
  for (var i = 0; i <= M; i++) {
    grid[i] = [];
    for (var j = 0; j <= N; j++) {
      var u = i / M, v = j / N, h = height(u, v);
      var p = project(u, v, h);
      grid[i][j] = { x: p[0], y: p[1], h: h };
    }
  }

  function quad(a, b, c, d) {
    var pts = [a, b, c, d], lo = a, hi = a;
    for (var k = 1; k < 4; k++) {
      if (pts[k].y > lo.y) lo = pts[k];
      if (pts[k].y < hi.y) hi = pts[k];
    }
    var fill;
    if (lo.y - hi.y < 0.5) {
      fill = cmap(hi.h);
    } else {
      fill = ctx.createLinearGradient(0, lo.y, 0, hi.y);
      fill.addColorStop(0, cmap(lo.h));
      fill.addColorStop(1, cmap(hi.h));
    }
    ctx.fillStyle = fill; ctx.strokeStyle = fill; ctx.lineWidth = 0.7;
    ctx.beginPath();
    ctx.moveTo(a.x, a.y); ctx.lineTo(b.x, b.y); ctx.lineTo(c.x, c.y); ctx.lineTo(d.x, d.y);
    ctx.closePath(); ctx.fill(); ctx.stroke();
  }
  function floorPt(u, v) { var p = project(u, v, 0); return { x: p[0], y: p[1], h: 0 }; }

  for (var jj = N - 1; jj >= 0; jj--) {
    for (var ii = 0; ii < M; ii++) {
      quad(grid[ii][jj + 1], grid[ii + 1][jj + 1], grid[ii + 1][jj], grid[ii][jj]);
      if (ii === M - 1) {
        quad(grid[M][jj + 1], grid[M][jj], floorPt(1, jj / N), floorPt(1, (jj + 1) / N));
      }
    }
  }
  for (var f = 0; f < M; f++) {
    quad(grid[f][0], grid[f + 1][0], floorPt((f + 1) / M, 0), floorPt(f / M, 0));
  }

  // Energy legend along the left upright
  for (var q = 0; q < 120; q++) {
    var t0 = q / 120, t1 = (q + 1.2) / 120;
    var col = cmap(1 - t0);
    line([[105 + 85 * t0, 195 + 595 * t0], [105 + 85 * t1, 195 + 595 * t1]], 2.2, col);
  }

  // Front lines
  line([[115, 190], [192, 803]], 1.4, '#fff');
  line([[192, 803], [1090, 1145]], 1.5, '#fff');
  line([[1090, 1145], [1418, 640]], 1.2, '#fff');
  for (var k2 = 1; k2 < 36; k2++) {
    var t = k2 / 36, tx = 192 + 898 * t, ty = 803 + 342 * t;
    line([[tx, ty], [tx + 2, ty + 12]], 1, '#fff');
  }
  for (var k3 = 1; k3 < 6; k3++) {
    var r = k3 / 6, rx = 1090 + 328 * r, ry = 1145 - 505 * r;
    line([[rx, ry], [rx + 8, ry + 6]], 1, '#fff');
  }
})();
```
